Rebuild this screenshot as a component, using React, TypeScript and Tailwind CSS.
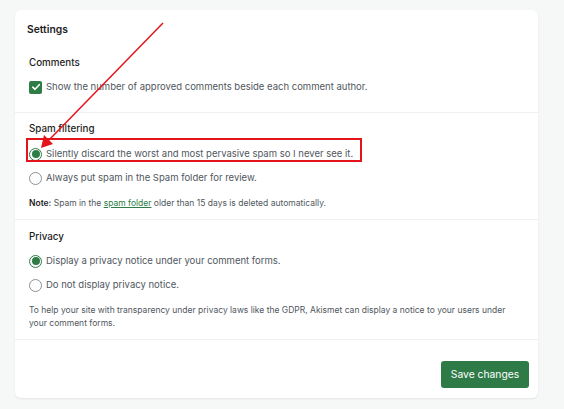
import React from "react";

function Radio({ checked }: { checked?: boolean }) {
  return checked ? (
    <span className="flex h-[13px] w-[13px] shrink-0 items-center justify-center rounded-full border border-[#2e7d46] bg-white">
      <span className="h-[8px] w-[8px] rounded-full bg-[#2e7d46]" />
    </span>
  ) : (
    <span className="h-[13px] w-[13px] shrink-0 rounded-full border border-[#8c8f94] bg-white" />
  );
}

function Checkbox() {
  return (
    <span className="flex h-[13px] w-[13px] shrink-0 items-center justify-center rounded-[2px] bg-[#2e7d46]">
      <svg width="10" height="10" viewBox="0 0 10 10" fill="none">
        <path d="M1.8 5.2 L4 7.3 L8.3 2.7" stroke="white" strokeWidth="1.6" strokeLinecap="round" strokeLinejoin="round" />
      </svg>
    </span>
  );
}

export default function App() {
  return (
    <div
      className="relative h-[409px] w-[564px] overflow-hidden bg-[#f6f7f7] pl-[15px] pt-[10px]"
      style={{ fontFamily: "Inter, 'Noto Sans', sans-serif" }}
    >
      <div className="flex h-[388px] w-[523px] flex-col rounded-[6px] bg-white shadow-[0_1px_2px_rgba(0,0,0,0.08)]">
        <div className="px-[12px] pt-[11px] text-[10.3px] font-semibold leading-[16px] text-[#1e1e1e]">Settings</div>

        <div className="px-[14px] pt-[18px] pb-[17px] border-b border-[#f0f0f1]">
          <div className="text-[9.8px] font-medium leading-[16px] text-[#1e1e1e]">Comments</div>
          <div className="mt-[8px] flex items-center gap-[4px]">
            <Checkbox />
            <span className="text-[9.5px] leading-[16px] text-[#50575e]">
              Show the number of approved comments beside each comment author.
            </span>
          </div>
        </div>

        <div className="px-[14px] pt-[8px] pb-[9px] border-b border-[#f0f0f1]">
          <div className="text-[9.8px] font-medium leading-[16px] text-[#1e1e1e]">Spam filtering</div>
          <div className="relative mt-[9px] flex items-center gap-[4px]">
            <Radio checked />
            <span className="text-[9.5px] leading-[16px] text-[#50575e]">
              Silently discard the worst and most pervasive spam so I never see it.
            </span>
            <div className="pointer-events-none absolute left-[-3px] top-[-8px] h-[24px] w-[336px] border-2 border-[#e4141b]" />
          </div>
          <div className="mt-[8px] flex items-center gap-[4px]">
            <Radio />
            <span className="text-[9.5px] leading-[16px] text-[#50575e]">
              Always put spam in the Spam folder for review.
            </span>
          </div>
          <div className="mt-[10px] text-[8.5px] leading-[14px] text-[#50575e]">
            <span className="font-semibold text-[#1e1e1e]">Note:</span> Spam in the{" "}
            <span className="text-[#2e7d46] underline">spam folder</span> older than 15 days is deleted automatically.
          </div>
        </div>

        <div className="px-[14px] pt-[9px] pb-[9px] border-b border-[#f0f0f1]">
          <div className="text-[9.8px] font-medium leading-[16px] text-[#1e1e1e]">Privacy</div>
          <div className="mt-[8px] flex items-center gap-[4px]">
            <Radio checked />
            <span className="text-[9.5px] leading-[16px] text-[#50575e]">
              Display a privacy notice under your comment forms.
            </span>
          </div>
          <div className="mt-[8px] flex items-center gap-[4px]">
            <Radio />
            <span className="text-[9.5px] leading-[16px] text-[#50575e]">Do not display privacy notice.</span>
          </div>
          <div className="mt-[11px] w-[480px] text-[8.5px] leading-[13px] text-[#50575e]">
            To help your site with transparency under privacy laws like the GDPR, Akismet can display a notice to your users under your comment forms.
          </div>
        </div>

        <div className="flex justify-end px-[9px] pt-[21px]">
          <button className="h-[27px] w-[88px] rounded-[3px] bg-[#2f7b47] text-[10.3px] font-normal text-white">
            Save changes
          </button>
        </div>
      </div>

      <svg className="pointer-events-none absolute left-0 top-0" width="564" height="409">
        <line x1="163" y1="23" x2="49" y2="140" stroke="#e4141b" strokeWidth="1.5" />
        <polygon points="41,148 44,135 53,144" fill="#e4141b" />
      </svg>
    </div>
  );
}
